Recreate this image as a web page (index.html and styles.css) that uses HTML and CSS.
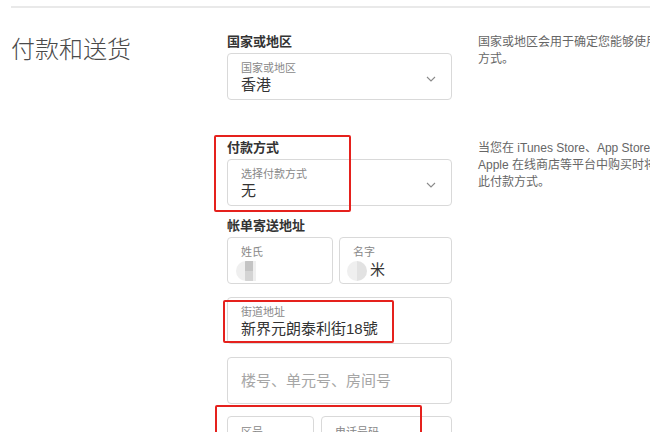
FILE: index.html
```html
<!DOCTYPE html>
<html lang="zh-CN">
<head>
<meta charset="utf-8">
<title>付款和送货</title>
<link rel="stylesheet" href="styles.css">
</head>
<body>
<div class="page">
  <div class="rule"></div>
  <div class="grid">
    <h1 class="title">付款和送货</h1>
    <div class="fields">
      <div class="section">
        <div class="sec-label">国家或地区</div>
        <div class="box select">
          <div class="small">国家或地区</div>
          <div class="value">香港</div>
          <svg class="chev" width="10" height="6" viewBox="0 0 10 6"><polyline points="1,1 5,5 9,1" fill="none" stroke="#8a8a8a" stroke-width="1.1"/></svg>
        </div>
      </div>
    </div>
    <p class="desc">国家或地区会用于确定您能够使用的付款<br>方式。</p>

    <div class="spacer"></div>
    <div class="fields">
      <div class="section sec-pay">
        <div class="sec-label">付款方式</div>
        <div class="box select">
          <div class="small">选择付款方式</div>
          <div class="value">无</div>
          <svg class="chev" width="10" height="6" viewBox="0 0 10 6"><polyline points="1,1 5,5 9,1" fill="none" stroke="#8a8a8a" stroke-width="1.1"/></svg>
        </div>
        <div class="mark mark-pay"></div>
      </div>
      <div class="section sec-bill">
        <div class="sec-label">帐单寄送地址</div>
        <div class="row row-name">
          <div class="box">
            <div class="small">姓氏</div>
            <div class="value"><span class="blob blob-a"></span></div>
          </div>
          <div class="box">
            <div class="small">名字</div>
            <div class="value"><span class="blob blob-b"></span>米</div>
          </div>
        </div>
        <div class="box street">
          <div class="small">街道地址</div>
          <div class="value">新界元朗泰利街18號</div>
          <div class="mark mark-street"></div>
        </div>
        <div class="box placeholder">楼号、单元号、房间号</div>
        <div class="row row-phone">
          <div class="box">
            <div class="small">区号</div>
          </div>
          <div class="box">
            <div class="small">电话号码</div>
          </div>
          <div class="mark mark-phone"></div>
        </div>
      </div>
    </div>
    <p class="desc desc-pay">当您在 iTunes Store、App Store、<br>Apple 在线商店等平台中购买时将使用<br>此付款方式。</p>
  </div>
</div>
</body>
</html>
```

FILE: styles.css
```css
html, body {
  margin: 0;
  padding: 0;
  background: #fff;
}
body {
  font-family: "Liberation Sans", "Noto Sans CJK SC", sans-serif;
  color: #333;
  overflow: hidden;
}
.page {
  padding: 6px 0 0 11px;
}
.rule {
  height: 2px;
  background: #e9e9e9;
}
.grid {
  display: grid;
  grid-template-columns: 216px 225px 1fr;
  column-gap: 0;
  margin-top: 25px;
  align-items: start;
}
.title {
  margin: 0;
  font-size: 24px;
  line-height: 30px;
  font-weight: 300;
  color: #4a4a4a;
  margin-top: 2px;
}
.spacer {
  height: 1px;
}
.fields {
  display: flex;
  flex-direction: column;
}
.section {
  position: relative;
}
.sec-pay {
  margin-top: 39px;
}
.sec-bill {
  margin-top: 11px;
  display: flex;
  flex-direction: column;
  gap: 13px;
}
.sec-bill .sec-label {
  margin-bottom: -11px;
}
.sec-label {
  font-size: 13px;
  line-height: 18px;
  font-weight: bold;
  color: #333;
  margin-bottom: 2px;
  white-space: nowrap;
}
.box {
  position: relative;
  box-sizing: border-box;
  height: 47px;
  border: 1px solid #d9d9d9;
  border-radius: 4px;
  padding: 7px 13px 0;
  background: #fff;
}
.small {
  font-size: 11px;
  line-height: 14px;
  color: #888;
  white-space: nowrap;
}
.value {
  font-size: 15px;
  line-height: 20px;
  color: #333;
  white-space: nowrap;
  display: flex;
  align-items: center;
}
.chev {
  position: absolute;
  right: 15px;
  top: 22px;
}
.row {
  display: grid;
  gap: 6px;
  position: relative;
}
.row-name {
  grid-template-columns: 106px 113px;
}
.row-phone {
  grid-template-columns: 87px 131px;
  gap: 7px;
  margin-top: -1px;
}
.row-phone .box {
  padding-top: 8px;
}
.placeholder {
  padding-top: 0;
  font-size: 15px;
  line-height: 45px;
  color: #a6a6a6;
}
.blob {
  display: inline-block;
  width: 20px;
  height: 20px;
  border-radius: 50%;
  margin-top: 2px;
}
.blob-a {
  background: linear-gradient(#c4c4c4, #c4c4c4) 9px 0 / 8px 10px no-repeat,
              linear-gradient(#d4d4d4, #d4d4d4) 9px 10px / 8px 10px no-repeat,
              #efefef;
  border-radius: 10px 0 0 10px;
  margin-left: -5px;
}
.blob-b {
  background: linear-gradient(#e2e2e2, #e2e2e2) 10px 0 / 10px 20px no-repeat, #efefef;
  margin-left: -6px;
  margin-right: 3px;
}
.mark {
  position: absolute;
  border: 2px solid #e5211d;
  border-radius: 2px;
  pointer-events: none;
}
.mark-pay {
  left: -13px;
  top: -4px;
  width: 133px;
  height: 73px;
}
.mark-street {
  left: -5px;
  top: 2px;
  width: 167px;
  height: 39px;
}
.mark-phone {
  left: -12px;
  top: -11px;
  width: 203px;
  height: 60px;
}
.desc {
  margin: 0;
  padding-left: 26px;
  font-size: 12px;
  line-height: 17px;
  color: #666;
  margin-top: 1px;
  white-space: nowrap;
}
.desc-pay {
  margin-top: 40px;
}
```
